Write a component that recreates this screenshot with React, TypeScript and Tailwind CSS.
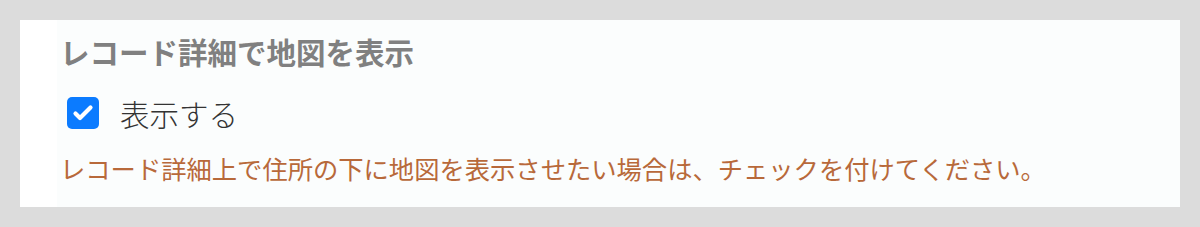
import React from "react";

export default function App() {
  const font = { fontFamily: '"Noto Sans CJK JP", "Noto Sans", sans-serif' };
  return (
    <div className="w-[1200px] h-[227px] bg-[#dcdcdc] p-[20px]" style={font}>
      <div className="flex h-[187px] w-[1160px] bg-white">
        <div className="w-[37px] shrink-0" />
        <div className="flex-1 bg-[#fbfdfd] pl-[3px] pt-[14px]">
          <h2 className="text-[29.5px] font-bold leading-[34px] text-[#808080]">
            レコード詳細で地図を表示
          </h2>
          <label className="mt-[27px] flex items-center pl-[7px]">
            <span className="flex h-[32px] w-[32px] items-center justify-center rounded-[5px] bg-[#0b7bff]">
              <svg width="24" height="24" viewBox="0 0 24 24" fill="none">
                <path d="M4.5 12.5l4.5 4.5L19.5 6.5" stroke="white" strokeWidth="4.2" strokeLinecap="round" strokeLinejoin="round" />
              </svg>
            </span>
            <span className="ml-[21px] text-[29.5px] font-light leading-[36px] text-[#333333]">
              表示する
            </span>
          </label>
          <p className="mt-[21px] text-[25.3px] leading-[32px] text-[#b8693a]">
            レコード詳細上で住所の下に地図を表示させたい場合は、チェックを付けてください。
          </p>
        </div>
      </div>
    </div>
  );
}
